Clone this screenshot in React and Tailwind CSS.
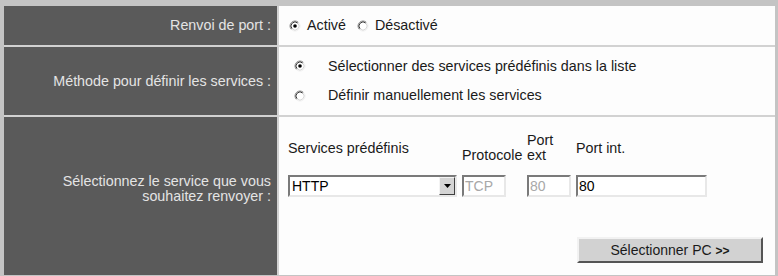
import React from "react";

const Radio = ({ checked }) => (
    <svg width="12" height="12" viewBox="0 0 12 12" className="shrink-0">
        <circle cx="6" cy="6" r="5" fill="#ffffff" />
        <path d="M2.46 9.54 A5 5 0 0 1 9.54 2.46" stroke="#8a8a8a" strokeWidth="1" fill="none" />
        <path d="M9.54 2.46 A5 5 0 0 1 2.46 9.54" stroke="#f0f0f0" strokeWidth="1" fill="none" />
        <path d="M3.17 8.83 A4 4 0 0 1 8.83 3.17" stroke="#3a3a3a" strokeWidth="1" fill="none" />
        <path d="M8.83 3.17 A4 4 0 0 1 3.17 8.83" stroke="#d8d8d8" strokeWidth="1" fill="none" />
        {checked && <circle cx="6" cy="6" r="1.8" fill="#000000" />}
    </svg>
);

const Field = ({ className, children, muted }) => (
    <div
        className={`h-[22px] bg-white border-2 border-t-[#7a7a7a] border-l-[#7a7a7a] border-r-[#e8e8e8] border-b-[#e8e8e8] flex items-center px-[1px] text-[14px] leading-none ${muted ? "text-[#a8a8a8]" : "text-black"} ${className}`}
    >
        {children}
    </div>
);

const Label = ({ children, extra = "" }) => (
    <div className={`bg-[#5a5a5a] text-[#e4e4e4] text-[14.3px] flex items-center justify-end text-right pr-[6px] leading-[15px] ${extra}`}>
        {children}
    </div>
);

export default function App() {
    return (
        <div className="w-[778px] h-[276px] overflow-hidden bg-[#c4c4c4] pt-[6px] pl-[4px] pr-[3px] font-['Liberation_Sans',Arial,sans-serif]">
            <div className="grid grid-cols-[273px_1fr] grid-rows-[39px_68px_158px] gap-[2px] bg-[#d2d2d2]">
                <Label>Renvoi de port :</Label>
                <div className="bg-[#fdfdfd] flex items-center pl-[10px] text-[14.3px] text-[#1a1a1a]">
                    <Radio checked />
                    <span className="ml-[6px]">Activé</span>
                    <span className="ml-[11px] flex"><Radio /></span>
                    <span className="ml-[6px]">Désactivé</span>
                </div>

                <Label>Méthode pour définir les services :</Label>
                <div className="bg-[#fdfdfd] flex flex-col justify-center gap-[8px] pl-[15px] text-[14.3px] text-[#1a1a1a]">
                    <div className="flex items-center">
                        <Radio checked />
                        <span className="ml-[22px]">Sélectionner des services prédéfinis dans la liste</span>
                    </div>
                    <div className="flex items-center">
                        <Radio />
                        <span className="ml-[22px]">Définir manuellement les services</span>
                    </div>
                </div>

                <Label extra="pb-[14px]">
                    <span>
                        Sélectionnez le service que vous
                        <br />
                        souhaitez renvoyer :
                    </span>
                </Label>
                <div className="bg-[#fdfdfd] pl-[9px] pt-[12px] text-[14.3px] text-[#1a1a1a]">
                    <div className="flex items-center h-[38px] leading-[15px]">
                        <div className="w-[174px]">Services prédéfinis</div>
                        <div className="w-[65px] self-end pb-[4px]">Protocole</div>
                        <div className="w-[49px]">Port<br />ext</div>
                        <div>Port int.</div>
                    </div>
                    <div className="flex items-center mt-[8px]">
                        <div className="w-[169px] h-[22px] bg-white border-2 border-t-[#7a7a7a] border-l-[#7a7a7a] border-r-[#e8e8e8] border-b-[#e8e8e8] flex items-center text-[14px] text-black">
                            <span className="flex-1 pl-[2px]">HTTP</span>
                            <div className="w-[16px] h-[18px] bg-[#d4d4d4] border border-t-[#f4f4f4] border-l-[#f4f4f4] border-r-[#404040] border-b-[#404040] flex items-center justify-center">
                                <svg width="7" height="4" viewBox="0 0 7 4"><path d="M0 0H7L3.5 4Z" fill="#000" /></svg>
                            </div>
                        </div>
                        <Field className="w-[44px] ml-[5px]" muted>TCP</Field>
                        <Field className="w-[44px] ml-[21px]" muted>80</Field>
                        <Field className="w-[131px] ml-[5px]">80</Field>
                    </div>
                    <div className="flex justify-end pr-[12px] mt-[40px]">
                        <button className="w-[186px] h-[26px] bg-[#d2d2d2] border-2 border-t-[#f2f2f2] border-l-[#f2f2f2] border-r-[#555555] border-b-[#555555] text-[14px] text-[#1a1a1a]">
                            Sélectionner PC <span className="font-bold text-[12px]">&gt;&gt;</span>
                        </button>
                    </div>
                </div>
            </div>
        </div>
    );
}
